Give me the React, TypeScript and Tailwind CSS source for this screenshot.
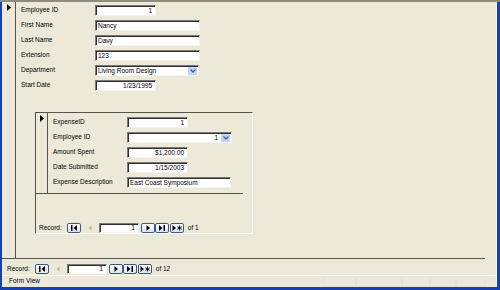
import React from "react";

const Sel = () => (
  <svg width="4" height="7" viewBox="0 0 4 7">
    <path d="M0 0 L4 3.5 L0 7Z" fill="#000" />
  </svg>
);

function DropBtn() {
  return (
    <div className="w-[9px] h-[8px] mr-[1px] bg-[#c3d3fd] rounded-[1px] flex items-center justify-center">
      <svg width="6" height="4" viewBox="0 0 6 4">
        <path d="M0.5 0.5 L3 3 L5.5 0.5" stroke="#4d6185" strokeWidth="1.3" fill="none" />
      </svg>
    </div>
  );
}

function Field({
  w,
  value,
  right,
  combo,
}: {
  w: string;
  value: string;
  right?: boolean;
  combo?: boolean;
}) {
  return (
    <div
      className={`${w} h-[11px] bg-white border border-t-[#7a7a7a] border-l-[#7a7a7a] border-r-[#f4f3ee] border-b-[#f4f3ee] shadow-[inset_1px_1px_0_#303030] flex items-center`}
    >
      <span className={right ? "flex-1 text-right pr-[3px] pt-[1px] leading-none" : "flex-1 pl-[2px] pt-[1px] leading-none"}>
        {value}
      </span>
      {combo && <DropBtn />}
    </div>
  );
}

function Row({ label, children }: { label: string; children: React.ReactNode }) {
  return (
    <div className="flex items-center h-[11px]">
      <div className="w-[74px] leading-none">{label}</div>
      {children}
    </div>
  );
}

function NavBtn({ children }: { children: React.ReactNode }) {
  return (
    <div className="w-[14px] h-[10px] rounded-[2px] border border-[#3d5a86] bg-linear-to-b from-white to-[#dde3ee] flex items-center justify-center">
      {children}
    </div>
  );
}

const FirstG = () => (
  <svg width="8" height="6" viewBox="0 0 8 6">
    <rect x="1" y="0" width="1.5" height="6" fill="#000" />
    <path d="M7 0 L3.5 3 L7 6Z" fill="#000" />
  </svg>
);
const PrevG = () => (
  <svg width="8" height="6" viewBox="0 0 8 6">
    <path d="M5.5 0.5 L2.5 3 L5.5 5.5Z" fill="#b8b6aa" />
  </svg>
);
const NextG = () => (
  <svg width="8" height="6" viewBox="0 0 8 6">
    <path d="M2.5 0 L6 3 L2.5 6Z" fill="#000" />
  </svg>
);
const LastG = () => (
  <svg width="8" height="6" viewBox="0 0 8 6">
    <path d="M1 0 L4.5 3 L1 6Z" fill="#000" />
    <rect x="5.5" y="0" width="1.5" height="6" fill="#000" />
  </svg>
);
const NewG = () => (
  <svg width="10" height="6" viewBox="0 0 10 6">
    <path d="M0.5 0 L4 3 L0.5 6Z" fill="#000" />
    <path d="M7.5 0.5 V5.5 M5.3 1.6 L9.7 4.4 M5.3 4.4 L9.7 1.6" stroke="#000" strokeWidth="0.9" />
  </svg>
);

function Nav({ total }: { total: string }) {
  return (
    <div className="flex items-center h-[10px]">
      <span className="leading-none">Record:</span>
      <div className="w-[5px]" />
      <NavBtn>
        <FirstG />
      </NavBtn>
      <div className="w-[14px] h-[10px] mx-[2px] flex items-center justify-center">
        <PrevG />
      </div>
      <div className="w-[40px] h-[10px] bg-white border border-t-[#7a7a7a] border-l-[#7a7a7a] border-r-[#f4f3ee] border-b-[#f4f3ee] shadow-[inset_1px_1px_0_#303030] flex items-center justify-end pr-[3px] pt-[1px] leading-none">
        1
      </div>
      <div className="w-[2px]" />
      <NavBtn>
        <NextG />
      </NavBtn>
      <NavBtn>
        <LastG />
      </NavBtn>
      <div className="w-[1px]" />
      <NavBtn>
        <NewG />
      </NavBtn>
      <span className="ml-[4px] leading-none">of {total}</span>
    </div>
  );
}

export default function App() {
  return (
    <div className="w-[500px] h-[290px] bg-[#ece9d8] flex flex-col overflow-hidden text-black text-[6.5px] font-['Liberation_Sans',Arial,sans-serif]">
      <div className="h-[2px] bg-[#8e8c81]" />
      <div className="flex flex-1 min-h-0">
        <div className="w-[2px] bg-[#1541b5]" />
        <div className="flex-1 flex flex-col">
          {/* main form */}
          <div className="flex h-[257px] w-[483px] border-b border-[#55544e]">
            <div className="w-[14px] border-r border-[#55544e] flex justify-center pt-[2px] pl-[1px]">
              <Sel />
            </div>
            <div className="flex-1 pl-[5px] pt-[3px] flex flex-col">
              <div className="flex flex-col gap-[4px]">
                <Row label="Employee ID">
                  <Field w="w-[61px]" value="1" right />
                </Row>
                <Row label="First Name">
                  <Field w="w-[105px]" value="Nancy" />
                </Row>
                <Row label="Last Name">
                  <Field w="w-[105px]" value="Davy" />
                </Row>
                <Row label="Extension">
                  <Field w="w-[105px]" value="123" />
                </Row>
                <Row label="Department">
                  <Field w="w-[104px]" value="Living Room Design" combo />
                </Row>
                <Row label="Start Date">
                  <Field w="w-[61px]" value="1/23/1995" right />
                </Row>
              </div>

              {/* subform */}
              <div className="mt-[21px] ml-[14px] w-[218px] h-[122px] border border-t-[#55544e] border-l-[#55544e] border-r-white border-b-white flex flex-col">
                <div className="flex h-[81px] w-[207px] border-b border-[#55544e]">
                  <div className="w-[12px] border-r border-[#55544e] flex justify-center pt-[2px]">
                    <Sel />
                  </div>
                  <div className="flex-1 pl-[5px] pt-[4px] flex flex-col gap-[4px]">
                    <Row label="ExpenseID">
                      <Field w="w-[61px]" value="1" right />
                    </Row>
                    <Row label="Employee ID">
                      <Field w="w-[105px]" value="1" right combo />
                    </Row>
                    <Row label="Amount Spent">
                      <Field w="w-[61px]" value="$1,200.00" right />
                    </Row>
                    <Row label="Date Submitted">
                      <Field w="w-[61px]" value="1/15/2003" right />
                    </Row>
                    <Row label="Expense Description">
                      <Field w="w-[104px]" value="East Coast Symposium" />
                    </Row>
                  </div>
                </div>
                <div className="flex-1" />
                <div className="pl-[3px]">
                  <Nav total="1" />
                </div>
              </div>
            </div>
          </div>
          {/* main nav */}
          <div className="h-[16px] flex items-end pb-[1px] pl-[5px]">
            <Nav total="12" />
          </div>
          {/* status bar */}
          <div className="h-[12px] border-t border-[#fbfaf6] flex items-center pl-[7px]">
            <span className="leading-none">Form View</span>
            <div className="ml-auto mr-[10px] flex h-[10px]">
              <div className="w-[33px] border border-[#e6e3d3]" />
              <div className="w-[46px] border border-[#e6e3d3]" />
              <div className="w-[28px] border border-[#e6e3d3]" />
              <div className="w-[26px] border border-[#e6e3d3]" />
              <div className="w-[30px] border border-[#e6e3d3]" />
            </div>
          </div>
        </div>
        <div className="w-[1px] bg-[#f4f3ee]" />
        <div className="w-[3px] bg-[#1541b5]" />
      </div>
      <div className="h-[3px] bg-[#1541b5]" />
    </div>
  );
}
